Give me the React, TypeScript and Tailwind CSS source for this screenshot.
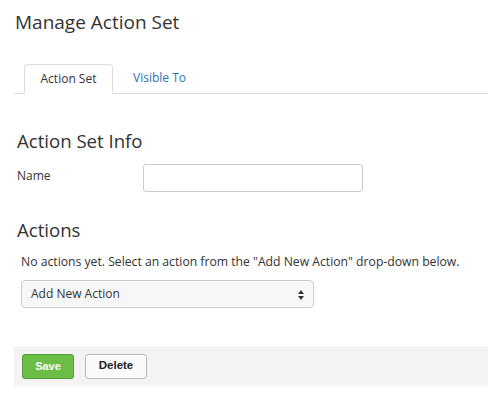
import React, { useState } from 'react';

const App: React.FC = () => {
  const [name, setName] = useState('');
  const [tab, setTab] = useState<'set' | 'visible'>('set');

  return (
    <div className="w-[488px] h-[393px] bg-white overflow-hidden text-[#333] font-['Open_Sans',sans-serif]">
      <div className="pl-[14px]">
        <h1 className="pt-[10px] pl-[1px] text-[19px] leading-[24px] text-[#333]">Manage Action Set</h1>

        <div className="mt-[30px] flex items-end border-b border-[#ddd] h-[30px] pl-[10px]">
          <button
            type="button"
            onClick={() => setTab('set')}
            className="h-[30px] w-[89px] -mb-px bg-white border border-[#ddd] border-b-white rounded-t-[4px] text-[12px] text-[#333]"
          >
            Action Set
          </button>
          <button
            type="button"
            onClick={() => setTab('visible')}
            className="h-[30px] px-[20px] text-[12px] text-[#2a73b7]"
          >
            Visible To
          </button>
        </div>
      </div>

      <div className="pl-[17px]">
        <h2 className="mt-[35px] text-[18.6px] leading-[24px]">Action Set Info</h2>
        <div className="mt-[14px] flex items-start">
          <label className="w-[126px] pt-[1px] text-[12px] leading-[16px]">Name</label>
          <input
            type="text"
            value={name}
            onChange={(e) => setName(e.target.value)}
            className="-mt-[3px] w-[220px] h-[28px] border border-[#ccc] rounded-[3px] px-2 text-[12px] outline-none"
          />
        </div>

        <h2 className="mt-[26px] text-[18.6px] leading-[24px]">Actions</h2>
      </div>

      <div className="pl-[21px]">
        <p className="mt-[12px] text-[12.2px] leading-[16px]">
          No actions yet. Select an action from the "Add New Action" drop-down below.
        </p>
        <div className="mt-[10px] relative w-[293px] h-[28px] border border-[#ccc] rounded-[4px] bg-[#f7f7f7] flex items-center pl-[9px] text-[12px]">
          Add New Action
          <svg className="absolute right-[9px] top-[9px]" width="6" height="10" viewBox="0 0 6 10">
            <path d="M3 0 L6 4 L0 4 Z" fill="#333" />
            <path d="M0 6 L6 6 L3 10 Z" fill="#333" />
          </svg>
        </div>
      </div>

      <div className="ml-[14px] mt-[38px] h-[40px] bg-[#f4f4f4] flex items-center gap-[11px] pl-[8px]">
        <button
          type="button"
          className="w-[52px] h-[25px] rounded-[3px] bg-[#6bbd45] border border-[#4f9e33] text-white text-[11px] font-bold font-['Liberation_Sans',sans-serif]"
        >
          Save
        </button>
        <button
          type="button"
          className="w-[62px] h-[25px] rounded-[3px] bg-[#fafafa] border border-[#bbb] text-[#222] text-[11.5px] font-bold font-['Liberation_Sans',sans-serif]"
        >
          Delete
        </button>
      </div>
      {tab === 'visible' && null}
    </div>
  );
};

export default App;
